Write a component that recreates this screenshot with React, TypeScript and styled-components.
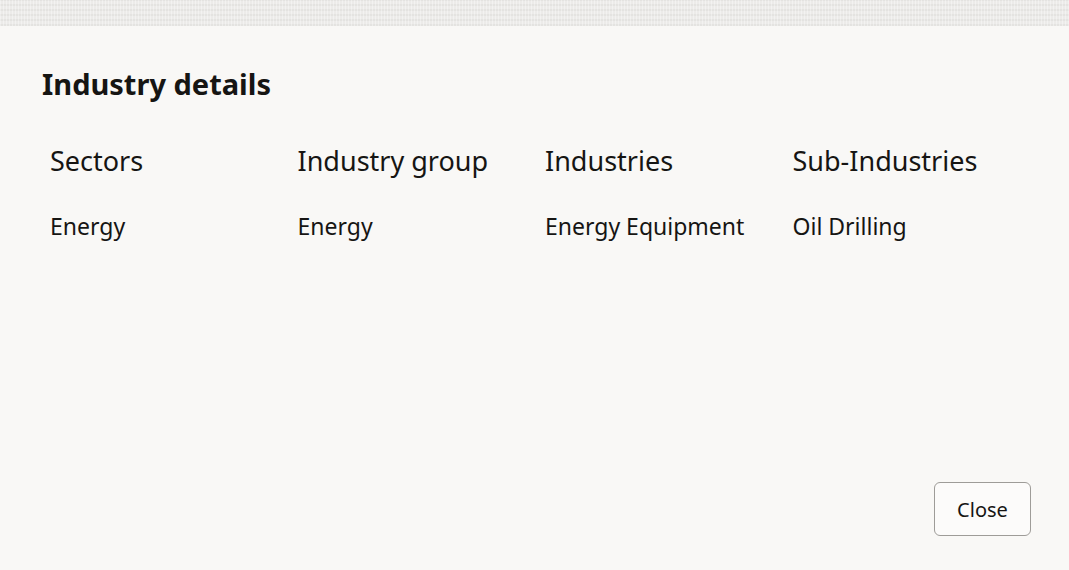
import React from "react";
import styled, { createGlobalStyle } from "styled-components";

const Global = createGlobalStyle`
  html, body { margin: 0; padding: 0; background: #f9f8f6; }
  body { font-family: "Noto Sans", "Open Sans", sans-serif; color: #161513; }
  #root { height: 570px; }
`;

const Page = styled.div`
  height: 570px;
  display: flex;
  flex-direction: column;
  background: #f9f8f6;
`;

const TopBand = styled.div`
  height: 26px;
  flex: none;
  background-color: #ecebe9;
  background-image: repeating-linear-gradient(
      90deg,
      rgba(255, 255, 255, 0.35) 0px,
      rgba(255, 255, 255, 0.35) 1px,
      transparent 1px,
      transparent 3px
    ),
    repeating-linear-gradient(
      0deg,
      rgba(220, 219, 216, 0.5) 0px,
      rgba(220, 219, 216, 0.5) 2px,
      transparent 2px,
      transparent 5px
    );
`;

const Body = styled.div`
  flex: 1;
  display: flex;
  flex-direction: column;
  padding: 38px 38px 34px 42px;
`;

const Title = styled.h1`
  margin: 0;
  font-size: 29px;
  font-weight: 700;
  line-height: 40px;
  color: #161513;
`;

const Grid = styled.div`
  display: grid;
  grid-template-columns: repeat(4, 247.5px);
  margin-top: 40px;
  padding-left: 8px;
  row-gap: 33px;
`;

const Header = styled.div`
  font-size: 27px;
  line-height: 34px;
  color: #161513;
`;

const Value = styled.div`
  font-size: 23px;
  line-height: 30px;
  color: #161513;
`;

const Footer = styled.div`
  margin-top: auto;
  display: flex;
  justify-content: flex-end;
`;

const Button = styled.button`
  width: 97px;
  height: 54px;
  border: 1px solid #9e9c98;
  border-radius: 6px;
  background: #fcfbfa;
  font-family: "Noto Sans", sans-serif;
  font-size: 20px;
  color: #161513;
  cursor: pointer;
`;

const columns = [
  { h: "Sectors", v: "Energy" },
  { h: "Industry group", v: "Energy" },
  { h: "Industries", v: "Energy Equipment" },
  { h: "Sub-Industries", v: "Oil Drilling" },
];

export default function App() {
  return (
    <>
      <Global />
      <Page>
        <TopBand />
        <Body>
          <Title>Industry details</Title>
          <Grid>
            {columns.map((c) => (
              <Header key={c.h}>{c.h}</Header>
            ))}
            {columns.map((c) => (
              <Value key={c.h + "v"}>{c.v}</Value>
            ))}
          </Grid>
          <Footer>
            <Button>Close</Button>
          </Footer>
        </Body>
      </Page>
    </>
  );
}
